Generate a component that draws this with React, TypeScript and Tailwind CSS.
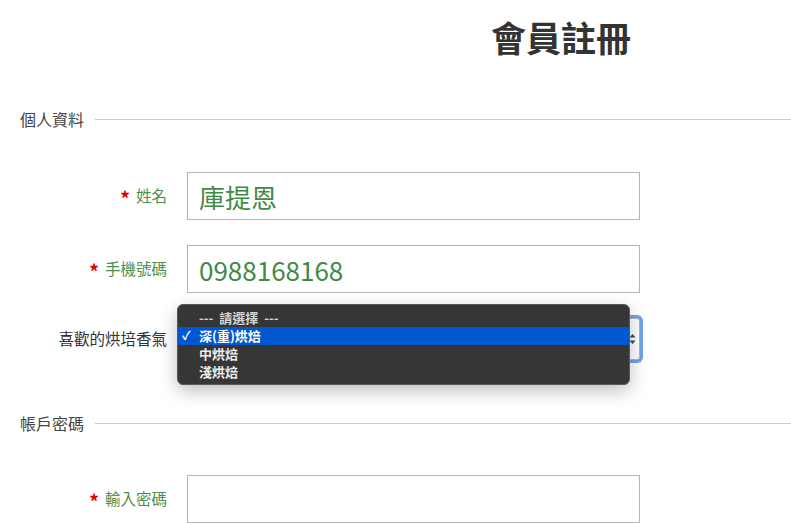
const font = { fontFamily: '"Noto Sans CJK TC", "Noto Sans", sans-serif' };

interface SectionTitleProps {
  title: string;
  className?: string;
}

const SectionTitle = ({ title, className }: SectionTitleProps) => (
  <div className={`flex items-center pl-[20px] ${className ?? ""}`}>
    <span className="text-[16px] leading-[20px] text-[#444]">{title}</span>
    <div className="ml-[11px] h-px flex-1 bg-[#cccccc]" />
  </div>
);

interface FieldRowProps {
  label: string;
  required?: boolean;
  value?: string;
  className?: string;
}

const FieldRow = ({ label, required, value, className }: FieldRowProps) => (
  <div className={`flex items-center ${className ?? ""}`}>
    <label className="flex w-[167px] items-center justify-end text-[15.5px] text-[#4e8f4e]">
      {required && <span className="mr-[6px] mt-[3px] text-[19px] font-bold leading-none text-[#e00000]">*</span>}
      {label}
    </label>
    <div className="ml-[20px] flex h-[48px] w-[453px] items-center border border-[#b5b5b5] bg-white px-[11px] text-[26px] text-[#3f8a44]">
      {value}
    </div>
  </div>
);

const options = ["--- 請選擇 ---", "深(重)烘焙", "中烘焙", "淺烘焙"];

export default function App() {
  return (
    <div className="h-[523px] w-[791px] overflow-hidden bg-white" style={font}>
      <h1 className="mt-[17px] pl-[491px] text-[35px] font-bold leading-[40px] text-[#333]">
        會員註冊
      </h1>

      <SectionTitle title="個人資料" className="mt-[52px]" />

      <FieldRow label="姓名" required value="庫提恩" className="mt-[43px]" />
      <FieldRow label="手機號碼" required value="0988168168" className="mt-[25px]" />

      <div className="mt-[25px] flex items-center">
        <label className="w-[167px] text-right text-[15.5px] text-[#333]">喜歡的烘培香氣</label>
        <div className="relative ml-[20px] h-[42px] w-[453px]">
          <div className="flex h-full w-full items-center justify-end rounded-[3px] border border-[#b5b5b5] bg-white pr-[3px] ring-[3px] ring-[#6ea2ef]">
            <svg width="7" height="12" viewBox="0 0 7 12" className="text-[#444]">
              <path d="M0.5 4.5 L3.5 1 L6.5 4.5 Z M0.5 7.5 L3.5 11 L6.5 7.5 Z" fill="currentColor" />
            </svg>
          </div>
          <div className="absolute left-[-10px] top-[-14px] h-[81px] w-[453px] rounded-[6px] border border-[#5a5a5a] bg-[#363636] py-[4px] shadow-[0_6px_18px_rgba(0,0,0,0.25)]">
            {options.map((opt, i) => (
              <div
                key={opt}
                className={`flex h-[18px] items-center whitespace-pre pb-[2px] text-[13px] font-semibold leading-none ${
                  i === 1 ? "bg-[#0058d0] text-white" : i === 0 ? "text-[#d4d4d4]" : "text-[#ececec]"
                }`}
              >
                <span className="w-[21px] pl-[4px] text-[12px] font-bold">{i === 1 ? "✓" : ""}</span>
                {i === 0 ? "---  請選擇  ---" : opt}
              </div>
            ))}
          </div>
        </div>
      </div>

      <SectionTitle title="帳戶密碼" className="mt-[53px]" />

      <FieldRow label="輸入密碼" required className="mt-[42px]" />
    </div>
  );
}
